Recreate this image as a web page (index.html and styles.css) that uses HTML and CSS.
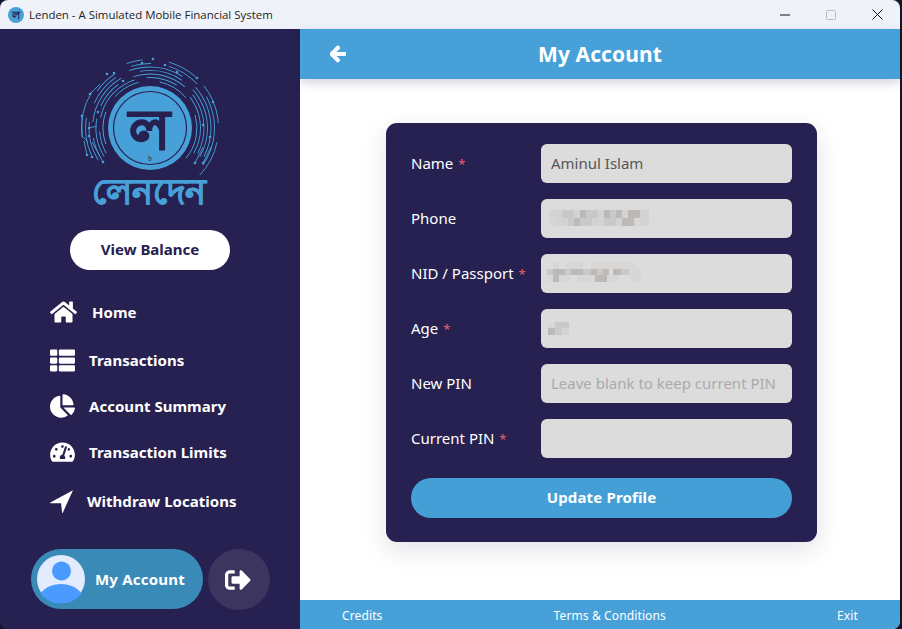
FILE: index.html
```html
<!DOCTYPE html>
<html lang="en">
<head>
<meta charset="utf-8">
<title>Lenden - A Simulated Mobile Financial System</title>
<link rel="stylesheet" href="styles.css">
</head>
<body>
<div class="window">
  <header class="titlebar">
    <div class="title-left">
      <span class="app-icon">ল</span>
      <span class="title-text">Lenden - A Simulated Mobile Financial System</span>
    </div>
    <div class="controls">
      <span class="control"><svg width="10" height="10" viewBox="0 0 10 10"><path d="M0 5h10" class="ctl-line"/></svg></span>
      <span class="control"><svg width="10" height="10" viewBox="0 0 10 10"><rect x="0.5" y="0.5" width="9" height="9" rx="1.2" class="ctl-off"/></svg></span>
      <span class="control"><svg width="11" height="11" viewBox="0 0 11 11"><path d="M0.5 0.5l10 10M10.5 0.5l-10 10" class="ctl-line"/></svg></span>
    </div>
  </header>
  <div class="app">
    <aside class="sidebar">
      <svg class="logo" width="140" height="120" viewBox="80 55 140 120">
        <g class="arcs">
          <circle cx="150" cy="128" r="47" pathLength="360" stroke-dasharray="40 22 34 26 38 24 56 120" transform="rotate(160 150 128)"/>
          <circle cx="150" cy="128" r="50.500" pathLength="360" stroke-dasharray="26 16 60 14 36 20 68 120" transform="rotate(150 150 128)"/>
          <circle cx="150" cy="128" r="54" pathLength="360" stroke-dasharray="42 14 30 18 58 12 66 120" transform="rotate(148 150 128)"/>
          <circle cx="150" cy="128" r="57.500" pathLength="360" stroke-dasharray="20 16 54 20 44 14 72 120" transform="rotate(150 150 128)"/>
          <circle cx="150" cy="128" r="61" pathLength="360" stroke-dasharray="38 18 32 14 52 16 70 120" transform="rotate(148 150 128)"/>
          <circle cx="150" cy="128" r="64.500" pathLength="360" stroke-dasharray="34 26 22 16 18 16 30 14 64 120" transform="rotate(155 150 128)"/>
          <circle cx="150" cy="128" r="68.500" pathLength="360" stroke-dasharray="40 38 14 22 26 10 34 16 32 128" transform="rotate(172 150 128)"/>
          <path d="M82 116v20l6 6M89 128l8-2M90 94l10-10M87 155l-3-14M103 162l-11-20M195 163l8-16M203 163l8-16"/>
        </g>
        <g class="dots">
          <circle cx="153" cy="59" r="1.300"/><circle cx="142" cy="63" r="1.300"/><circle cx="114" cy="73" r="1.300"/>
          <circle cx="107" cy="74" r="1.300"/><circle cx="197" cy="78" r="1.300"/><circle cx="213" cy="102" r="1.300"/>
          <circle cx="82" cy="116" r="1.300"/><circle cx="90" cy="94" r="1.300"/><circle cx="89" cy="128" r="1.300"/>
          <circle cx="89" cy="136" r="1.300"/><circle cx="87" cy="155" r="1.300"/><circle cx="92" cy="157" r="1.300"/>
          <circle cx="103" cy="162" r="1.300"/><circle cx="195" cy="163" r="1.300"/><circle cx="203" cy="163" r="1.300"/>
          <circle cx="210" cy="137" r="1.300"/><circle cx="203" cy="125" r="1.300"/><circle cx="165" cy="65" r="1.300"/>
          <circle cx="177" cy="72" r="1.300"/><circle cx="123" cy="81" r="1.300"/><circle cx="98" cy="112" r="1.300"/>
        </g>
        <circle class="coin" cx="150" cy="128" r="42"/>
        <circle class="coin-ring" cx="150" cy="128" r="36.500"/>
        <text class="coin-letter" x="149" y="149">ল</text>
        <text class="coin-taka" x="150" y="161">৳</text>
      </svg>
      <div class="wordmark">লেনদেন</div>
      <button class="balance">View Balance</button>
      <nav class="nav">
        <a class="nav-row nav-home">
          <svg class="icon" width="27" height="24" viewBox="0 0 576 512"><path d="M280.37 148.26L96 300.11V464a16 16 0 0 0 16 16l112.06-.29a16 16 0 0 0 15.92-16V368a16 16 0 0 1 16-16h64a16 16 0 0 1 16 16v95.64a16 16 0 0 0 16 16.05L464 480a16 16 0 0 0 16-16V300L295.67 148.26a12.19 12.19 0 0 0-15.3 0zM571.6 251.47L488 182.56V44.05a12 12 0 0 0-12-12h-56a12 12 0 0 0-12 12v72.61L318.47 43a48 48 0 0 0-61 0L4.34 251.47a12 12 0 0 0-1.6 16.9l25.5 31A12 12 0 0 0 45.15 301l235.22-193.74a12.19 12.19 0 0 1 15.3 0L530.9 301a12 12 0 0 0 16.9-1.6l25.5-31a12 12 0 0 0-1.7-16.93z"/></svg>
          <span>Home</span>
        </a>
        <a class="nav-row nav-after">
          <svg class="icon" width="25" height="25" viewBox="0 0 512 512"><path d="M149.333 216v80c0 13.255-10.745 24-24 24H24c-13.255 0-24-10.745-24-24v-80c0-13.255 10.745-24 24-24h101.333c13.255 0 24 10.745 24 24zM0 376v80c0 13.255 10.745 24 24 24h101.333c13.255 0 24-10.745 24-24v-80c0-13.255-10.745-24-24-24H24c-13.255 0-24 10.745-24 24zM125.333 32H24C10.745 32 0 42.745 0 56v80c0 13.255 10.745 24 24 24h101.333c13.255 0 24-10.745 24-24V56c0-13.255-10.745-24-24-24zm80 448H488c13.255 0 24-10.745 24-24v-80c0-13.255-10.745-24-24-24H205.333c-13.255 0-24 10.745-24 24v80c0 13.255 10.745 24 24 24zm-24-424v80c0 13.255 10.745 24 24 24H488c13.255 0 24-10.745 24-24V56c0-13.255-10.745-24-24-24H205.333c-13.255 0-24 10.745-24 24zm24 264H488c13.255 0 24-10.745 24-24v-80c0-13.255-10.745-24-24-24H205.333c-13.255 0-24 10.745-24 24v80c0 13.255 10.745 24 24 24z"/></svg>
          <span>Transactions</span>
        </a>
        <a class="nav-row">
          <svg class="icon" width="25" height="24" viewBox="0 0 544 512"><path d="M527.79 288H290.5l158.03 158.03c6.04 6.04 15.98 6.53 22.19.68 38.7-36.46 65.32-85.61 73.13-140.86 1.34-9.46-6.51-17.85-16.06-17.85zm-15.83-64.8C503.72 103.74 408.26 8.28 288.8.04 279.68-.59 272 7.1 272 16.24V240h223.77c9.14 0 16.82-7.68 16.19-16.8zM224 288V50.71c0-9.55-8.39-17.4-17.84-16.06C86.99 51.49-4.1 155.6.14 280.37 4.5 408.51 114.83 513.59 243.03 511.98c50.4-.63 96.97-16.87 135.26-44.03 7.9-5.6 8.42-17.23 1.57-24.08L224 288z"/></svg>
          <span>Account Summary</span>
        </a>
        <a class="nav-row">
          <svg class="icon" width="25" height="22" viewBox="0 0 576 512"><path d="M288 32C128.94 32 0 160.94 0 320c0 52.8 14.25 102.26 39.06 144.8 5.61 9.62 16.3 15.2 27.44 15.2h443c11.14 0 21.83-5.58 27.44-15.2C561.75 422.26 576 372.8 576 320c0-159.06-128.94-288-288-288zm0 64c14.71 0 26.58 10.13 30.32 23.65-1.11 2.26-2.64 4.23-3.45 6.67l-9.22 27.67c-5.13 3.49-10.97 6.01-17.64 6.01-17.67 0-32-14.33-32-32S270.33 96 288 96zM96 384c-17.67 0-32-14.33-32-32s14.33-32 32-32 32 14.33 32 32-14.33 32-32 32zm48-160c-17.67 0-32-14.33-32-32s14.33-32 32-32 32 14.33 32 32-14.33 32-32 32zm246.77-72.41l-61.33 184C343.13 347.33 352 364.54 352 384c0 11.72-3.38 22.55-8.88 32H232.88c-5.5-9.45-8.88-20.28-8.88-32 0-33.94 26.5-61.43 59.9-63.59l61.34-184.01c4.17-12.56 17.73-19.45 30.36-15.17 12.57 4.19 19.35 17.79 15.17 30.36zm14.66 57.2l15.52-46.55c3.47-1.29 7.13-2.23 11.05-2.23 17.67 0 32 14.33 32 32s-14.33 32-32 32c-11.38-.01-20.89-6.28-26.57-15.22zM480 384c-17.67 0-32-14.33-32-32s14.33-32 32-32 32 14.33 32 32-14.33 32-32 32z"/></svg>
          <span>Transaction Limits</span>
        </a>
        <a class="nav-row nav-last">
          <svg class="icon" width="23" height="23" viewBox="0 0 23 23"><path d="M23 0.2L0.3 12.6c-.4.3-.2.7.2.7h10.6l1 9.5c0 .3.4.4.6.1z"/></svg>
          <span>Withdraw Locations</span>
        </a>
      </nav>
      <div class="account-bar">
        <a class="account">
          <svg class="avatar" width="48" height="48" viewBox="0 0 48 48">
            <circle cx="24" cy="24" r="24" class="av-bg"/>
            <circle cx="24.500" cy="16" r="9.500" class="av-fg"/>
            <path d="M3.500 38.500C8 32.500 15 29 24 29s16 3.500 20.500 9.500A24 24 0 0 1 24 48 24 24 0 0 1 3.500 38.500z" class="av-fg"/>
          </svg>
          <span>My Account</span>
        </a>
        <button class="logout" aria-label="Log out">
          <svg class="icon" width="26" height="26" viewBox="0 0 512 512"><path d="M497 273L329 441c-15 15-41 4.500-41-17v-96H152c-13.300 0-24-10.700-24-24v-96c0-13.300 10.700-24 24-24h136V88c0-21.400 25.900-32 41-17l168 168c9.300 9.400 9.300 24.600 0 34zM192 436v-40c0-6.600-5.400-12-12-12H96c-17.700 0-32-14.300-32-32V160c0-17.700 14.300-32 32-32h84c6.600 0 12-5.400 12-12V76c0-6.600-5.400-12-12-12H96c-53 0-96 43-96 96v192c0 53 43 96 96 96h84c6.600 0 12-5.400 12-12z"/></svg>
        </button>
      </div>
    </aside>
    <main class="content">
      <header class="page-head">
        <svg class="back" width="16" height="18" viewBox="0 0 448 512"><path d="M257.500 445.100l-22.200 22.200c-9.400 9.400-24.600 9.400-33.900 0L7 273c-9.400-9.400-9.400-24.600 0-33.900L201.400 44.700c9.400-9.400 24.600-9.400 33.900 0l22.200 22.200c9.500 9.500 9.300 25-.4 34.300L136.600 216H424c13.300 0 24 10.700 24 24v32c0 13.300-10.700 24-24 24H136.600l120.500 114.800c9.800 9.300 10 24.800.4 34.300z"/></svg>
        <h1>My Account</h1>
      </header>
      <div class="page-body">
        <form class="card">
          <div class="field">
            <label>Name <span class="req">*</span></label>
            <span class="input-wrap"><input class="input" value="Aminul Islam"></span>
          </div>
          <div class="field">
            <label>Phone</label>
            <span class="input-wrap">
              <input class="input">
              <svg class="mosaic mosaic-phone" width="99" height="16" viewBox="0 0 99 16" shape-rendering="crispEdges">
                <path class="t1" d="M0 0h12v8h-12zM24 0h6v8h-6zM48 0h6v8h-6zM72 0h6v8h-6zM90 0h9v8h-9zM6 8h12v8h-12zM42 8h12v8h-12zM66 8h6v8h-6zM90 8h9v8h-9z"/>
                <path class="t2" d="M12 0h12v8h-12zM36 0h12v8h-12zM60 0h6v8h-6zM18 8h6v8h-6zM30 8h12v8h-12zM54 8h12v8h-12z"/>
                <path class="t3" d="M30 0h6v8h-6zM54 0h6v8h-6zM66 0h6v8h-6zM78 0h12v8h-12zM24 8h6v8h-6zM72 8h12v8h-12z"/>
                <path class="t4" d="M0 8h6v8h-6zM84 8h6v8h-6z"/>
              </svg>
            </span>
          </div>
          <div class="field">
            <label>NID / Passport <span class="req">*</span></label>
            <span class="input-wrap">
              <input class="input">
              <svg class="mosaic mosaic-nid" width="94" height="20" viewBox="0 0 94 20" shape-rendering="crispEdges">
                <path class="t4" d="M6 0h6v7h-6zM18 0h18v7h-18zM44 0h44v7h-44zM0 13h6v7h-6zM18 13h6v7h-6zM30 13h18v7h-18zM60 13h12v7h-12zM82 7h12v13h-12zM12 13h6v7h-6z"/>
                <path class="t2" d="M0 7h6v6h-6zM18 7h6v6h-6zM36 7h8v6h-8zM50 7h6v6h-6zM74 7h8v6h-8z"/>
                <path class="t3" d="M6 7h12v6h-12zM24 7h12v6h-12zM44 7h6v6h-6zM56 7h6v6h-6zM66 7h8v6h-8zM6 13h6v7h-6zM48 13h12v7h-12z"/>
              </svg>
            </span>
          </div>
          <div class="field">
            <label>Age <span class="req">*</span></label>
            <span class="input-wrap">
              <input class="input">
              <svg class="mosaic mosaic-age" width="21" height="13" viewBox="0 0 21 13" shape-rendering="crispEdges">
                <path class="t4" d="M0 0h7v6h-7z"/>
                <path class="t2" d="M7 0h14v6h-14zM7 6h7v7h-7z"/>
                <path class="t3" d="M0 6h7v7h-7z"/>
                <path class="t1" d="M14 6h7v7h-7z"/>
              </svg>
            </span>
          </div>
          <div class="field">
            <label>New PIN</label>
            <span class="input-wrap"><input class="input" placeholder="Leave blank to keep current PIN"></span>
          </div>
          <div class="field">
            <label>Current PIN <span class="req">*</span></label>
            <span class="input-wrap"><input class="input"></span>
          </div>
          <button class="submit" type="button">Update Profile</button>
        </form>
      </div>
      <footer class="page-foot">
        <a>Credits</a>
        <a>Terms &amp; Conditions</a>
        <a>Exit</a>
      </footer>
    </main>
  </div>
</div>
</body>
</html>
```
FILE: styles.css
```css
* { box-sizing: border-box; }
html, body { height: 100%; }
body {
  margin: 0;
  background: #15152a;
  font-family: "Noto Sans", "Open Sans", sans-serif;
  overflow: hidden;
}
.window {
  width: 900px;
  height: 629px;
  border-radius: 8px;
  overflow: hidden;
  display: flex;
  flex-direction: column;
  background: #262151;
}
.titlebar {
  height: 29px;
  flex: none;
  display: flex;
  justify-content: space-between;
  align-items: center;
  background: #eff2f9;
  padding-left: 8px;
}
.title-left { display: flex; align-items: center; gap: 5px; }
.app-icon {
  width: 16px;
  height: 16px;
  border-radius: 50%;
  background: #47a1d8;
  color: #262151;
  font-size: 11px;
  font-weight: 700;
  line-height: 16px;
  text-align: center;
}
.title-text { font-size: 11.45px; color: #1d1d22; font-family: "Open Sans", sans-serif; }
.controls { display: flex; height: 100%; }
.control { width: 46px; display: flex; align-items: center; justify-content: center; }
.ctl-line { fill: none; stroke: #111; stroke-width: 1; }
.ctl-off { fill: none; stroke: #bdbdc2; stroke-width: 1; }

.app { flex: 1; display: flex; min-height: 0; }
.sidebar {
  width: 300px;
  flex: none;
  background: #262151;
  display: flex;
  flex-direction: column;
  padding-top: 26px;
  padding-bottom: 19px;
}
.logo { display: block; margin: 0 auto; }
.arcs { fill: none; stroke: #47a1d8; stroke-width: 0.9; }
.dots { fill: #47a1d8; }
.coin { fill: #47a1d8; }
.coin-ring { fill: none; stroke: #262151; stroke-width: 1.2; }
.coin-letter {
  fill: #262151;
  stroke: #262151;
  stroke-width: 1.4;
  font-size: 55px;
  font-weight: 700;
  text-anchor: middle;
}
.coin-taka { fill: #262151; font-size: 8px; text-anchor: middle; }
.wordmark {
  color: #47a1d8;
  font-size: 35px;
  font-weight: 700;
  line-height: 31px;
  height: 38px;
  padding-right: 2px;
  text-align: center;
  -webkit-text-stroke: 0.7px #47a1d8;
}
.balance {
  align-self: center;
  width: 160px;
  height: 40px;
  margin-top: 17px;
  padding: 0 0 2px;
  border: 0;
  border-radius: 20px;
  background: #fff;
  color: #262151;
  font: 700 15px "Noto Sans", sans-serif;
}
.nav { display: flex; flex-direction: column; margin-top: 19px; padding-left: 50px; }
.nav-row {
  height: 46px;
  display: flex;
  align-items: center;
  gap: 14px;
  color: #fff;
  font-size: 15px;
  font-weight: 700;
  letter-spacing: 0.03px;
}
.nav-home { gap: 15px; }
.nav-after { margin-top: 2px; }
.nav-last { margin-top: 3px; }
.icon { fill: #fff; flex: none; }
.account-bar { margin-top: auto; padding-left: 31px; display: flex; gap: 5px; align-items: flex-end; }
.account {
  width: 172px;
  height: 60px;
  margin-bottom: 1px;
  border-radius: 30px;
  background: #3a8ab8;
  display: flex;
  align-items: center;
  padding-left: 6px;
  gap: 10px;
  color: #fff;
  font-size: 15px;
  font-weight: 700;
  letter-spacing: 0.2px;
}
.account span { padding-bottom: 1px; }
.av-bg { fill: #e3ebff; }
.av-fg { fill: #4a9aff; }
.logout {
  width: 62px;
  height: 61px;
  border: 0;
  padding: 0 2px 0 0;
  border-radius: 50%;
  background: #3c3560;
  display: flex;
  align-items: center;
  justify-content: center;
}

.content { flex: 1; display: flex; flex-direction: column; background: #fff; min-width: 0; }
.page-head {
  height: 50px;
  flex: none;
  position: relative;
  z-index: 1;
  background: #47a1d8;
  display: flex;
  align-items: center;
  justify-content: center;
  box-shadow: 0 4px 10px rgba(38, 33, 81, 0.2);
}
.page-head h1 { margin: 0; color: #fff; font-size: 21px; font-weight: 700; letter-spacing: 0.08px; }
.back { position: absolute; left: 30px; top: 16px; fill: #fff; stroke: #fff; stroke-width: 40; stroke-linejoin: round; }
.page-body { flex: 1; min-height: 0; padding: 44px 83px 0 86px; }
.card {
  width: 431px;
  height: 419px;
  border-radius: 11px;
  background: #262151;
  padding: 21px 25px 24px;
  display: flex;
  flex-direction: column;
  gap: 16px;
  box-shadow: 0 8px 24px rgba(38, 33, 81, 0.13);
}
.field { display: grid; grid-template-columns: 130px 251px; align-items: center; height: 39px; }
.field label { color: #fff; font-size: 15px; padding-bottom: 2px; }
.req { color: #e8606f; font-size: 13px; margin-left: 1px; }
.input-wrap { position: relative; display: block; height: 39px; }
.input {
  display: block;
  width: 100%;
  height: 100%;
  border: 0;
  border-radius: 6px;
  background: #dcdcdc;
  padding: 0 10px 2px;
  color: #555;
  font: 15px "Noto Sans", sans-serif;
  outline: 0;
}
.input::placeholder { color: #aaa; opacity: 1; }
.mosaic { position: absolute; }
.mosaic-phone { left: 9px; top: 11px; }
.mosaic-nid { left: 6px; top: 8px; }
.mosaic-age { left: 7px; top: 13px; }
.t1 { fill: #d3d3d3; }
.t2 { fill: #c9c9c9; }
.t3 { fill: #bcb9b6; }
.t4 { fill: #d8d7d6; }
.submit {
  height: 40px;
  margin-top: 4px;
  padding: 0 0 2px;
  border: 0;
  border-radius: 20px;
  background: #459fd7;
  color: #fff;
  font: 700 15px "Noto Sans", sans-serif;
  letter-spacing: 0.15px;
}
.page-foot {
  height: 29px;
  flex: none;
  background: #47a1d8;
  display: flex;
  align-items: center;
  justify-content: space-between;
  padding: 1px 42px 0;
  color: #fff;
  font-size: 12px;
  letter-spacing: 0.12px;
}
```
